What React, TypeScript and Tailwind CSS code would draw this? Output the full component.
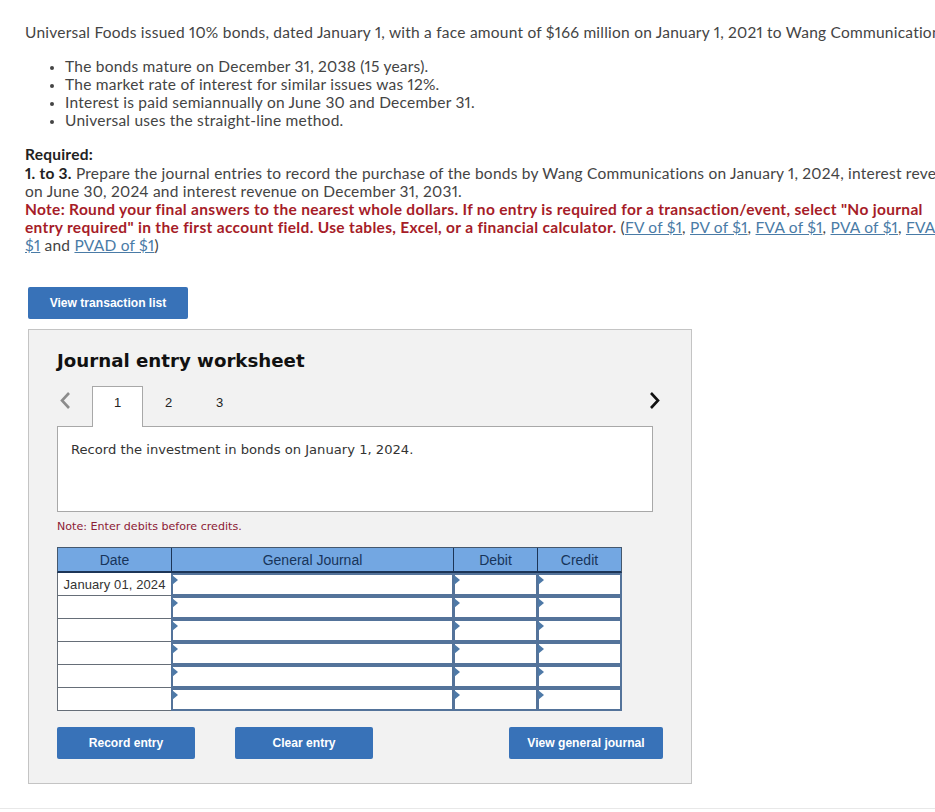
import React from "react";

const bullets = [
  "The bonds mature on December 31, 2038 (15 years).",
  "The market rate of interest for similar issues was 12%.",
  "Interest is paid semiannually on June 30 and December 31.",
  "Universal uses the straight-line method.",
];

const Btn: React.FC<{ label: string; className: string }> = ({ label, className }) => (
  <button className={`h-8 rounded-[2px] bg-[#3872b8] text-white text-[12.1px] font-bold font-['Liberation_Sans',sans-serif] ${className}`}>
    {label}
  </button>
);

const Link: React.FC<{ children: React.ReactNode }> = ({ children }) => (
  <a className="text-[#4a7ba6] underline">{children}</a>
);

const InputCell: React.FC<{ w: string; last?: boolean }> = ({ w, last }) => (
  <div className={`relative h-[23px] bg-white border-[2px] border-[#54739a] ${w} ${last ? "" : "-mr-px"}`}>
    <span className="absolute left-[-1px] top-0 w-0 h-0 border-y-[5px] border-y-transparent border-l-[6px] border-l-[#4e79a7]" />
  </div>
);

const Row: React.FC<{ date?: string }> = ({ date }) => (
  <div className="flex">
    <div className="w-[114px] h-[23px] bg-white border border-t-0 border-r-0 border-[#666e78] text-[13px] tracking-[0.1px] leading-[24px] text-center text-[#333]">
      {date}
    </div>
    <InputCell w="w-[283px]" />
    <InputCell w="w-[85px]" />
    <InputCell w="w-[85px]" last />
  </div>
);

const Chevron: React.FC<{ points: string; className: string }> = ({ points, className }) => (
  <svg viewBox="0 0 12 18" fill="none" stroke="currentColor" strokeWidth="2.6" className={className}>
    <polyline points={points} />
  </svg>
);

export default function App() {
  return (
    <div className="relative h-[812px] w-[935px] overflow-hidden bg-white pt-[23px] font-['Lato',sans-serif] proportional-nums tracking-[0.23px] text-[15.5px] leading-[18px] text-[#444]">
      <div className="pl-[25px] whitespace-nowrap">
        Universal Foods issued 10% bonds, dated January 1, with a face amount of $166 million on January 1, 2021 to Wang Communications
      </div>

      <ul className="mt-4 ml-[65px] list-disc marker:text-[12px] whitespace-nowrap">
        {bullets.map((b) => (
          <li key={b}>{b}</li>
        ))}
      </ul>

      <div className="mt-[17px] pl-[25px] whitespace-nowrap">
        <div className="font-bold text-[#222] -mt-px mb-px">Required:</div>
        <div>
          <b className="text-[#222]">1. to 3.</b> Prepare the journal entries to record the purchase of the bonds by Wang Communications on January 1, 2024, interest revenue
        </div>
        <div>on June 30, 2024 and interest revenue on December 31, 2031.</div>
        <div className="font-bold text-[#a61c28] tracking-[0.32px]">
          Note: Round your final answers to the nearest whole dollars. If no entry is required for a transaction/event, select "No journal
        </div>
        <div>
          <span className="font-bold text-[#a61c28] tracking-[0.32px]">entry required" in the first account field. Use tables, Excel, or a financial calculator.</span> (<Link>FV of $1</Link>, <Link>PV of $1</Link>, <Link>FVA of $1</Link>, <Link>PVA of $1</Link>, <Link>FVAD of</Link>
        </div>
        <div>
          <Link>$1</Link> and <Link>PVAD of $1</Link>)
        </div>
      </div>

      <div className="mt-[33px] ml-[28px]">
        <Btn label="View transaction list" className="block w-[160px] tracking-normal" />
      </div>

      <div className="mt-[10px] ml-[28px] w-[664px] h-[455px] bg-[#f2f2f2] border border-[#c4c4c4] pl-[28px] pt-[19px] font-['DejaVu_Sans',sans-serif] tracking-normal">
        <h2 className="text-[18.2px] leading-[24px] font-bold text-[#111]">Journal entry worksheet</h2>

        <div className="relative mt-[13px] w-[596px] h-[40px] flex items-start">
          <Chevron points="10,1 3,8.5 10,16" className="absolute left-[2px] top-[6px] w-[12px] h-[18px] text-[#8c8c8c]" />
          <Chevron points="2,1 9,8.5 2,16" className="absolute right-[-8px] top-[6px] w-[12px] h-[18px] text-[#111]" />
          <div className="ml-[35px] w-[51px] h-[41px] z-10 bg-white border border-b-0 border-[#a8a8a8] pt-[6px] text-center text-[13px] leading-[20px] font-['Liberation_Sans',sans-serif] text-[#222]">
            1
          </div>
          <div className="w-[51px] pt-[7px] text-center text-[13px] leading-[20px] font-['Liberation_Sans',sans-serif] text-[#222]">2</div>
          <div className="w-[51px] pt-[7px] text-center text-[13px] leading-[20px] font-['Liberation_Sans',sans-serif] text-[#222]">3</div>
        </div>

        <div className="w-[596px] h-[86px] bg-white border border-[#a8a8a8] pl-[13px] pt-[14px] text-[13.13px] leading-[18px] text-[#333]">
          Record the investment in bonds on January 1, 2024.
        </div>

        <div className="mt-[7px] text-[11.1px] leading-[15px] text-[#8c2035]">Note: Enter debits before credits.</div>

        <div className="mt-[13px] w-[565px] font-['Liberation_Sans',sans-serif]">
          <div className="flex h-[26px] bg-[#73a7e2] border border-[#45586e] border-b-2 border-b-[#1c3557] text-[14px] leading-[24px] text-center text-[#17345a]">
            <div className="w-[114px] border-r border-[#1c3557]">Date</div>
            <div className="w-[282px] border-r border-[#1c3557]">General Journal</div>
            <div className="w-[84px] border-r border-[#1c3557]">Debit</div>
            <div className="flex-1">Credit</div>
          </div>
          <Row date="January 01, 2024" />
          <Row />
          <Row />
          <Row />
          <Row />
          <Row />
        </div>

        <div className="relative mt-[16px] w-[606px] flex">
          <Btn label="Record entry" className="w-[138px]" />
          <Btn label="Clear entry" className="ml-[40px] w-[138px]" />
          <Btn label="View general journal" className="ml-auto w-[154px]" />
        </div>
      </div>

      <div className="absolute left-0 right-0 top-[808px] h-px bg-[#e8e8e8]" />
    </div>
  );
}
